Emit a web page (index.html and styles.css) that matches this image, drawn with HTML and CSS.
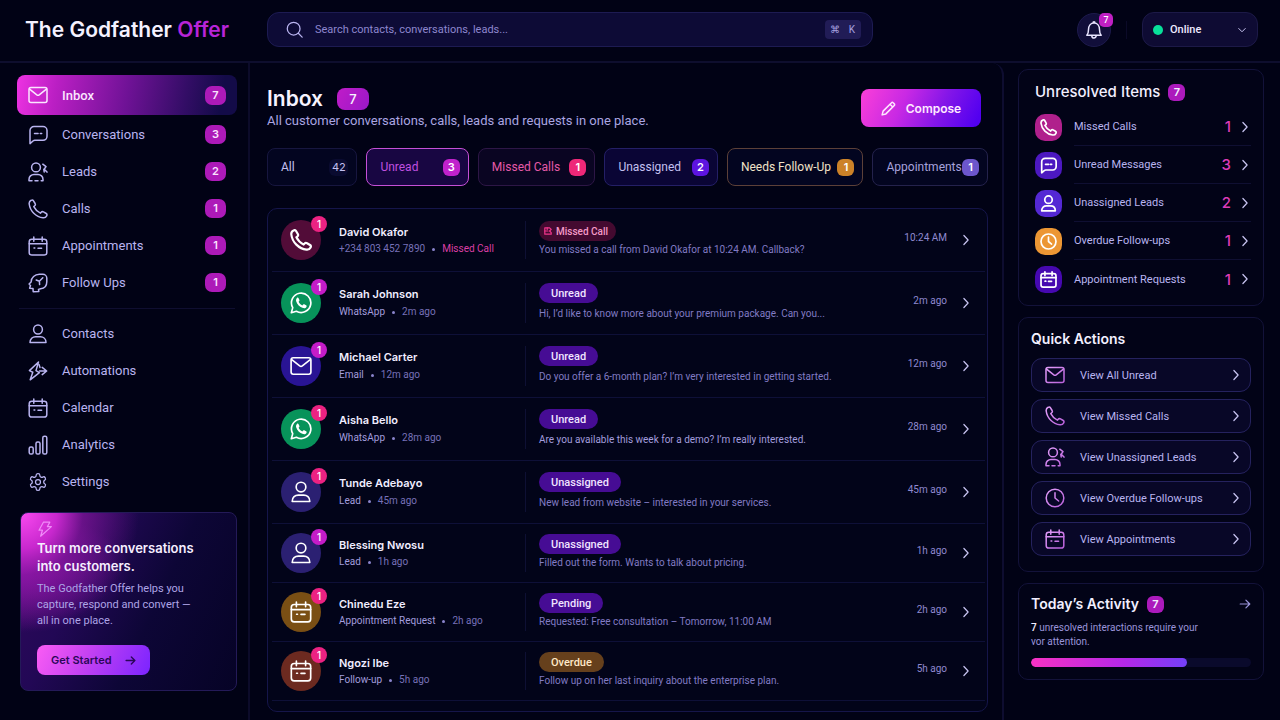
FILE: index.html
```
<!DOCTYPE html>
<html lang="en">
<head>
<meta charset="utf-8">
<title>The Godfather Offer – Inbox</title>
<meta name="viewport" content="width=device-width, initial-scale=1">
<link rel="stylesheet" href="styles.css">
</head>
<body>
<svg class="sprite" width="0" height="0" aria-hidden="true">
  <defs>
    <linearGradient id="pinkStroke" gradientUnits="userSpaceOnUse" x1="0" y1="0" x2="20" y2="20">
      <stop offset="0" stop-color="#e9a6ff"/><stop offset="1" stop-color="#b45ad6"/>
    </linearGradient>
  </defs>
  <symbol id="mail" viewBox="0 0 20 20"><rect x="1" y="2.5" width="18" height="15" rx="2"/><path d="M1.6 4.2l7.2 5.7q1.2 .9 2.4 0l7.2-5.7"/></symbol>
  <symbol id="chat" viewBox="0 0 20 20"><path d="M2 18.6V5.5a4 4 0 0 1 4-4h9a4 4 0 0 1 4 4v5.8a4 4 0 0 1-4 4H6.8q-1 0-1.8.7z"/><path d="M6.5 8.6h3.6M12.3 8.6h1.4"/></symbol>
  <symbol id="leads" viewBox="0 0 20 20"><circle cx="8" cy="5.4" r="4.4"/><path d="M4 18.8H1v-1.4a5 5 0 0 1 5-5h4a5 5 0 0 1 5 5v1.4h-1.8M7 18.8h3"/><path d="M14.8 2.2l3.2 2.4-1.8 2.6 2.8 2.9M15.8 7.3l.4 2.6"/></symbol>
  <symbol id="phone" viewBox="0 0 20 20"><path d="M3.2 1.3C1.8 1.9 1 3.2 1.2 5 2 12 8 18 15 18.8c1.8.2 3-.6 3.7-2 .5-1 .3-1.8-.5-2.3l-2.7-1.6c-.9-.5-1.7-.3-2.3.4l-.8.9C10 13 7 10 5.8 7.6l.9-.8c.7-.6.9-1.4.4-2.3L5.5 1.8C5 1 4.2.8 3.2 1.3z"/></symbol>
  <symbol id="calendar" viewBox="0 0 20 20"><rect x="1.2" y="3.2" width="17.6" height="15.8" rx="2.6"/><path d="M1.2 7.8h17.6M5.8 1v4.2M14.2 1v4.2M6 12h.8M10 12.2h3.6"/></symbol>
  <symbol id="follow" viewBox="0 0 20 20"><path d="M5.2 18.8l-.2-3.2-3.4-.4.9-2.6-1.4-1.5 2-2.2C3.2 4.4 6.8 1.5 11.4 1.3h3.4a4 4 0 0 1 4 4v3.4c0 4.1-2.6 6.7-6.2 7.1l-2.1.6.3 2.2z"/><path d="M8.2 7l3.2 1.2 3.4-3.4M11.4 8.2l.2 3.4"/></symbol>
  <symbol id="user" viewBox="0 0 20 20"><circle cx="10" cy="5.5" r="4.4"/><path d="M2 18.6c0-3.8 2.6-5.8 5.6-5.8h4.8c3 0 5.6 2 5.6 5.8z"/></symbol>
  <symbol id="automation" viewBox="0 0 20 20"><path d="M10.5 1L1.4 9.6l3.4 1.6-2.6 7.6 9.2-7.2-3.4-2z"/><path d="M11.5 10h7M14.2 6.4l4.5 3.6-4.5 3.6M11 3.5l1 3"/></symbol>
  <symbol id="bolt" viewBox="0 0 20 20"><path d="M8 1.5h8l-3 5.5h5L4.5 19l2.3-7.5H2.5z"/></symbol>
  <symbol id="bars" viewBox="0 0 20 20"><rect x="1.2" y="12" width="4" height="7" rx="1.6"/><rect x="8" y="7" width="4" height="12" rx="1.6"/><rect x="14.8" y="1.2" width="4" height="17.8" rx="1.6"/></symbol>
  <symbol id="gear" viewBox="0 0 24 24"><path d="M12.22 2h-.44a2 2 0 0 0-2 2v.18a2 2 0 0 1-1 1.73l-.43.25a2 2 0 0 1-2 0l-.15-.08a2 2 0 0 0-2.73.73l-.22.38a2 2 0 0 0 .73 2.73l.15.1a2 2 0 0 1 1 1.72v.51a2 2 0 0 1-1 1.74l-.15.09a2 2 0 0 0-.73 2.73l.22.38a2 2 0 0 0 2.73.73l.15-.08a2 2 0 0 1 2 0l.43.25a2 2 0 0 1 1 1.73V20a2 2 0 0 0 2 2h.44a2 2 0 0 0 2-2v-.18a2 2 0 0 1 1-1.73l.43-.25a2 2 0 0 1 2 0l.15.08a2 2 0 0 0 2.73-.73l.22-.39a2 2 0 0 0-.73-2.73l-.15-.08a2 2 0 0 1-1-1.74v-.5a2 2 0 0 1 1-1.74l.15-.09a2 2 0 0 0 .73-2.73l-.22-.38a2 2 0 0 0-2.73-.73l-.15.08a2 2 0 0 1-2 0l-.43-.25a2 2 0 0 1-1-1.73V4a2 2 0 0 0-2-2z"/><circle cx="12" cy="12" r="3"/></symbol>
  <symbol id="clock" viewBox="0 0 20 20"><circle cx="10" cy="10" r="8.8"/><path d="M10 4.8V10l3.6 3"/></symbol>
  <symbol id="search" viewBox="0 0 20 20"><circle cx="9" cy="9" r="7.5"/><path d="M14.5 14.5L19 19"/></symbol>
  <symbol id="bell" viewBox="0 0 20 20"><path d="M2.8 15.2c1.4-1.4 1.7-2.9 1.7-5.7C4.5 5.8 6.6 3 10 3s5.5 2.8 5.5 6.5c0 2.8.3 4.3 1.7 5.7zM7.8 15.5a2.2 2.6 0 0 0 4.4 0M9 2.8a1 1 0 0 1 2 0"/></symbol>
  <symbol id="pencil" viewBox="0 0 20 20"><path d="M1.5 18.5l1.3-5L14 2.3a1.5 1.5 0 0 1 2.2 0l1.5 1.5a1.5 1.5 0 0 1 0 2.2L6.5 17.2zM12 4.3l3.7 3.7"/></symbol>
  <symbol id="right" viewBox="0 0 20 20"><path d="M6.5 2.5l7 7.5-7 7.5"/></symbol>
  <symbol id="down" viewBox="0 0 20 20"><path d="M3.5 7l6.5 6.5L16.5 7"/></symbol>
  <symbol id="arrow" viewBox="0 0 20 20"><path d="M2 10h16M11.5 3.5L18 10l-6.5 6.5"/></symbol>
  <symbol id="whatsapp" viewBox="0 0 20 20"><path d="M1.2 18.8l1.3-4.6A8.8 8.8 0 1 1 5.8 17.5z"/><path class="solid" d="M6.3 5.4c.5-.5 1.2-.4 1.5.2l.8 1.7c.1.4 0 .7-.3 1l-.5.6c.8 1.5 1.9 2.6 3.4 3.3l.8-.8c.3-.3.6-.4 1-.2l1.6.8c.6.3.7.8.4 1.3-.6 1.2-1.8 1.7-3.1 1.3-3.2-.9-5.4-3.1-6.3-6.2-.3-1.2 0-2.3.7-3z"/></symbol>
  <symbol id="missed" viewBox="0 0 20 20"><path d="M2 2h12l4 4-4 4 4 4v4H2z"/><path d="M2 10h8M8 2v4"/></symbol>
</svg>

<header class="topbar">
  <h1 class="brand">The Godfather <span>Offer</span></h1>
  <label class="search">
    <svg class="icon search-icon"><use href="#search"/></svg>
    <input type="search" aria-label="Search" placeholder="Search contacts, conversations, leads...">
    <kbd><span>⌘</span><span>K</span></kbd>
  </label>
  <div class="account">
    <button class="bell" type="button" aria-label="Notifications"><svg class="icon"><use href="#bell"/></svg><span class="bell-count">7</span></button>
    <span class="rule"></span>
    <div class="status">
      <span class="dot"></span>
      <select aria-label="Status"><option>Online</option><option>Away</option></select>
      <svg class="icon chevron"><use href="#down"/></svg>
    </div>
  </div>
</header>

<div class="shell">
  <aside class="sidebar">
    <nav class="nav">
      <a class="active" href="#"><svg class="icon"><use href="#mail"/></svg>Inbox<b class="count">7</b></a>
      <a href="#"><svg class="icon"><use href="#chat"/></svg>Conversations<b class="count">3</b></a>
      <a href="#"><svg class="icon"><use href="#leads"/></svg>Leads<b class="count">2</b></a>
      <a href="#"><svg class="icon"><use href="#phone"/></svg>Calls<b class="count">1</b></a>
      <a href="#"><svg class="icon"><use href="#calendar"/></svg>Appointments<b class="count">1</b></a>
      <a href="#"><svg class="icon"><use href="#follow"/></svg>Follow Ups<b class="count">1</b></a>
      <hr>
      <a href="#"><svg class="icon"><use href="#user"/></svg>Contacts</a>
      <a href="#"><svg class="icon"><use href="#automation"/></svg>Automations</a>
      <a href="#"><svg class="icon"><use href="#calendar"/></svg>Calendar</a>
      <a href="#"><svg class="icon"><use href="#bars"/></svg>Analytics</a>
      <a href="#"><svg class="icon"><use href="#gear"/></svg>Settings</a>
    </nav>
    <section class="promo">
      <svg class="icon bolt"><use href="#bolt"/></svg>
      <h2>Turn more conversations<br>into customers.</h2>
      <p>The Godfather Offer helps you<br>capture, respond and convert —<br>all in one place.</p>
      <button type="button">Get Started<svg class="icon"><use href="#arrow"/></svg></button>
    </section>
  </aside>

  <main class="main">
    <div class="head">
      <div>
        <h2 class="title">Inbox <span class="title-count">7</span></h2>
        <p class="lead">All customer conversations, calls, leads and requests in one place.</p>
      </div>
      <button class="compose" type="button"><svg class="icon"><use href="#pencil"/></svg>Compose</button>
    </div>

    <div class="tabs">
      <button type="button" class="tab all">All<b>42</b></button>
      <button type="button" class="tab unread">Unread<b>3</b></button>
      <button type="button" class="tab missed">Missed Calls<b>1</b></button>
      <button type="button" class="tab unassigned">Unassigned<b>2</b></button>
      <button type="button" class="tab followup">Needs Follow-Up<b>1</b></button>
      <button type="button" class="tab appts">Appointments<b>1</b></button>
    </div>

    <ul class="list">
      <li class="row first">
        <div class="avatar wine"><svg class="icon"><use href="#phone"/></svg><b class="hot">1</b></div>
        <div class="who"><h3>David Okafor</h3><p><span class="dim">+234 803 452 7890</span><i></i><span class="pink">Missed Call</span></p></div>
        <div class="what"><span class="tag rose"><svg class="icon"><use href="#missed"/></svg>Missed Call</span><p>You missed a call from David Okafor at 10:24 AM. Callback?</p></div>
        <time>10:24 AM</time><svg class="icon go"><use href="#right"/></svg>
      </li>
      <li class="row">
        <div class="avatar green"><svg class="icon"><use href="#whatsapp"/></svg><b>1</b></div>
        <div class="who"><h3>Sarah Johnson</h3><p>WhatsApp<i></i><span class="dim">2m ago</span></p></div>
        <div class="what"><span class="tag">Unread</span><p>Hi, I’d like to know more about your premium package. Can you...</p></div>
        <time>2m ago</time><svg class="icon go"><use href="#right"/></svg>
      </li>
      <li class="row">
        <div class="avatar indigo"><svg class="icon"><use href="#mail"/></svg><b>1</b></div>
        <div class="who"><h3>Michael Carter</h3><p>Email<i></i><span class="dim">12m ago</span></p></div>
        <div class="what"><span class="tag">Unread</span><p>Do you offer a 6-month plan? I’m very interested in getting started.</p></div>
        <time>12m ago</time><svg class="icon go"><use href="#right"/></svg>
      </li>
      <li class="row">
        <div class="avatar green"><svg class="icon"><use href="#whatsapp"/></svg><b class="hot">1</b></div>
        <div class="who"><h3>Aisha Bello</h3><p>WhatsApp<i></i><span class="dim">28m ago</span></p></div>
        <div class="what bright"><span class="tag">Unread</span><p>Are you available this week for a demo? I’m really interested.</p></div>
        <time>28m ago</time><svg class="icon go"><use href="#right"/></svg>
      </li>
      <li class="row">
        <div class="avatar violet"><svg class="icon"><use href="#user"/></svg><b class="hot">1</b></div>
        <div class="who"><h3>Tunde Adebayo</h3><p>Lead<i></i><span class="dim">45m ago</span></p></div>
        <div class="what"><span class="tag">Unassigned</span><p>New lead from website – interested in your services.</p></div>
        <time>45m ago</time><svg class="icon go"><use href="#right"/></svg>
      </li>
      <li class="row compact">
        <div class="avatar violet"><svg class="icon"><use href="#user"/></svg><b>1</b></div>
        <div class="who"><h3>Blessing Nwosu</h3><p>Lead<i></i><span class="dim">1h ago</span></p></div>
        <div class="what"><span class="tag">Unassigned</span><p>Filled out the form. Wants to talk about pricing.</p></div>
        <time>1h ago</time><svg class="icon go"><use href="#right"/></svg>
      </li>
      <li class="row compact">
        <div class="avatar amber"><svg class="icon"><use href="#calendar"/></svg><b class="hot">1</b></div>
        <div class="who"><h3>Chinedu Eze</h3><p>Appointment Request<i></i><span class="dim">2h ago</span></p></div>
        <div class="what"><span class="tag">Pending</span><p>Requested: Free consultation – Tomorrow, 11:00 AM</p></div>
        <time>2h ago</time><svg class="icon go"><use href="#right"/></svg>
      </li>
      <li class="row compact">
        <div class="avatar rust"><svg class="icon"><use href="#calendar"/></svg><b class="hot">1</b></div>
        <div class="who"><h3>Ngozi Ibe</h3><p>Follow-up<i></i><span class="dim">5h ago</span></p></div>
        <div class="what"><span class="tag brown">Overdue</span><p>Follow up on her last inquiry about the enterprise plan.</p></div>
        <time>5h ago</time><svg class="icon go"><use href="#right"/></svg>
      </li>
    </ul>
  </main>

  <aside class="rail">
    <section class="card unresolved">
      <h2>Unresolved Items <b class="pill">7</b></h2>
      <ul>
        <li><span class="tile magenta"><svg class="icon"><use href="#phone"/></svg></span><a href="#">Missed Calls<b>1</b><svg class="icon go"><use href="#right"/></svg></a></li>
        <li><span class="tile purple"><svg class="icon"><use href="#chat"/></svg></span><a href="#">Unread Messages<b>3</b><svg class="icon go"><use href="#right"/></svg></a></li>
        <li><span class="tile blue"><svg class="icon"><use href="#user"/></svg></span><a href="#">Unassigned Leads<b>2</b><svg class="icon go"><use href="#right"/></svg></a></li>
        <li><span class="tile orange"><svg class="icon"><use href="#clock"/></svg></span><a href="#">Overdue Follow-ups<b>1</b><svg class="icon go"><use href="#right"/></svg></a></li>
        <li><span class="tile deep"><svg class="icon"><use href="#calendar"/></svg></span><a href="#">Appointment Requests<b>1</b><svg class="icon go"><use href="#right"/></svg></a></li>
      </ul>
    </section>
    <section class="card quick">
      <h2>Quick Actions</h2>
      <button type="button"><svg class="icon tint"><use href="#mail"/></svg>View All Unread<svg class="icon go"><use href="#right"/></svg></button>
      <button type="button"><svg class="icon tint"><use href="#phone"/></svg>View Missed Calls<svg class="icon go"><use href="#right"/></svg></button>
      <button type="button"><svg class="icon tint"><use href="#leads"/></svg>View Unassigned Leads<svg class="icon go"><use href="#right"/></svg></button>
      <button type="button"><svg class="icon tint"><use href="#clock"/></svg>View Overdue Follow-ups<svg class="icon go"><use href="#right"/></svg></button>
      <button type="button"><svg class="icon tint"><use href="#calendar"/></svg>View Appointments<svg class="icon go"><use href="#right"/></svg></button>
    </section>
    <section class="card activity">
      <h2>Today’s Activity <b class="pill">7</b><svg class="icon"><use href="#arrow"/></svg></h2>
      <p><strong>7</strong> unresolved interactions require your<br>vor attention.</p>
      <progress max="100" value="71" aria-label="Activity"></progress>
    </section>
  </aside>
</div>
</body>
</html>
```
FILE: styles.css
```
* { box-sizing: border-box; }
body, h1, h2, h3, p, ul { margin: 0; padding: 0; }
body {
  min-height: 100vh;
  display: flex;
  flex-direction: column;
  background: #010215;
  color: #b9b4f0;
  font-family: Roboto, "Liberation Sans", sans-serif;
  font-size: 13px;
}
h1, h2, h3, b, .compose, .promo button { font-family: Inter, "Liberation Sans", sans-serif; }
ul { list-style: none; }
a { color: inherit; text-decoration: none; }
button, input, select { font: inherit; color: inherit; }
button { cursor: pointer; }
.sprite { position: absolute; }
.icon {
  width: 20px;
  height: 20px;
  flex: none;
  fill: none;
  stroke: currentColor;
  stroke-width: 1.5;
  stroke-linecap: round;
  stroke-linejoin: round;
}
.solid { fill: currentColor; stroke: none; }
.go { width: 12px; height: 12px; stroke-width: 2; color: #c9c5f2; }

/* Top bar */
.topbar {
  display: flex;
  align-items: center;
  height: 63px;
  padding: 0 22px 2px 25px;
  border-bottom: 2px solid #0e0e2e;
}
.brand { width: 242px; font-size: 21px; font-weight: 600; line-height: 30px; color: #f4f1ff; white-space: nowrap; }
.brand span { color: #b824d8; }
.search {
  display: flex;
  align-items: center;
  flex: 0 1 606px;
  height: 35px;
  padding: 0 11px 0 18px;
  border: 1px solid #1d1b52;
  border-radius: 12px;
  background: #0d0b36;
}
.search-icon { width: 17px; height: 17px; color: #b9b4f0; }
.search input {
  flex: 1;
  min-width: 0;
  margin-left: 12px;
  padding: 0;
  border: 0;
  outline: 0;
  background: none;
  font-size: 11px;
}
.search input::placeholder { color: #8d87cf; opacity: 1; }
kbd {
  display: flex;
  align-items: center;
  justify-content: space-between;
  width: 36px;
  height: 19px;
  padding: 0 6px 0 5px;
  border-radius: 4px;
  background: #211c56;
  font-family: inherit;
  font-size: 10px;
  color: #a8a2e0;
}
.account { display: flex; align-items: center; margin-left: auto; }
.bell {
  position: relative;
  display: grid;
  place-items: center;
  width: 34px;
  height: 34px;
  padding: 0;
  border: 1px solid #1d1a4c;
  border-radius: 50%;
  background: #110e3a;
  color: #e8e4ff;
}
.bell-count {
  position: absolute;
  top: -1px;
  right: -3px;
  width: 14px;
  height: 14px;
  border-radius: 5px;
  background: #c020c4;
  color: #fff;
  font-size: 9px;
  font-weight: 500;
  line-height: 14px;
}
.rule { width: 1px; height: 18px; margin: 0 15px; background: #0b0a28; }
.status {
  display: flex;
  align-items: center;
  width: 116px;
  height: 35px;
  padding: 0 10px;
  border: 1px solid #1c1947;
  border-radius: 12px;
  background: #0e0b33;
}
.dot { width: 10px; height: 10px; border-radius: 50%; background: #08e09a; }
.status select {
  appearance: none;
  flex: 1;
  min-width: 0;
  margin-left: 7px;
  padding: 0;
  border: 0;
  background: none;
  font-size: 11px;
  font-weight: 500;
  color: #eeeaff;
}
.chevron { width: 10px; height: 10px; stroke-width: 2; color: #c9c5f2; }

/* Page columns */
.shell { flex: 1; display: grid; grid-template-columns: 250px minmax(0, 1fr) 276px; }

/* Sidebar */
.sidebar { padding: 12px 11px 12px 17px; border-right: 2px solid #0c0b2a; }
.nav a {
  display: flex;
  align-items: center;
  height: 37px;
  padding: 0 11px;
  gap: 14px;
  border-radius: 8px;
}
.nav a.active {
  height: 40px;
  margin-bottom: 1px;
  background: linear-gradient(100deg, #ee33e2 0%, #bb1fc4 18%, #6f1296 50%, #330d66 76%, #130b48 92%);
  color: #fbe6ff;
  font-weight: 500;
}
.count {
  width: 21px;
  height: 19px;
  margin-left: auto;
  border-radius: 7px;
  background: #ad1ab8;
  color: #fbe3ff;
  font-size: 11px;
  font-weight: 600;
  line-height: 19px;
  text-align: center;
}
.nav hr { height: 1px; margin: 7px 2px 6px; border: 0; background: #0f0e30; }
.promo {
  margin: 12px 0 0 3px;
  padding: 8px 16px 15px;
  border: 1px solid #241a58;
  border-radius: 8px;
  background:
    radial-gradient(circle at 0 0, #fa4af0 0, #c828ce 36px, rgba(150, 24, 170, .6) 62px, rgba(80, 14, 120, 0) 118px),
    radial-gradient(ellipse at 0 60px, #76129a 0, rgba(60, 10, 110, 0) 110px),
    linear-gradient(115deg, #31085c 0%, #220855 30%, #0d0636 60%, #060326 100%);
}
.bolt { display: block; width: 16px; height: 16px; color: #f08cf8; }
.promo h2 { font-size: 13px; font-weight: 600; line-height: 18px; margin-top: 2px; color: #f6eeff; white-space: nowrap; }
.promo p { margin: 6px 0 16px; font-size: 11px; line-height: 16px; color: #aea4e6; white-space: nowrap; }
.promo button {
  display: flex;
  align-items: center;
  justify-content: space-between;
  width: 113px;
  height: 30px;
  padding: 0 14px;
  border: 0;
  border-radius: 8px;
  background: linear-gradient(115deg, #fa5cf4 0%, #c341f2 45%, #7a24ff 100%);
  font-size: 11px;
  font-weight: 600;
  color: #2a0758;
}
.promo button .icon { width: 11px; height: 11px; stroke-width: 2.5; }

/* Main column */
.main { padding: 23px 14px 8px 17px; border-right: 2px solid #0e0d30; border-radius: 0 12px 0 0; }
.head { display: flex; justify-content: space-between; align-items: center; padding-right: 7px; }
.title { display: flex; align-items: center; gap: 14px; font-size: 21px; font-weight: 600; line-height: 26px; color: #f6f3ff; }
.title-count {
  width: 32px;
  height: 22px;
  border-radius: 8px;
  background: linear-gradient(120deg, #c01cc8, #9a18c8);
  font-size: 13px;
  font-weight: 500;
  line-height: 22px;
  text-align: center;
}
.lead { line-height: 18px; color: #aaa5e2; }
.compose {
  display: flex;
  align-items: center;
  justify-content: center;
  gap: 10px;
  width: 120px;
  height: 38px;
  padding: 0;
  border: 0;
  border-radius: 8px;
  background: linear-gradient(115deg, #fb3fd8 0%, #c829e4 35%, #8416e8 65%, #5200f0 95%);
  color: #ffe9ff;
  font-size: 12px;
  font-weight: 600;
}
.compose .icon { width: 15px; height: 15px; stroke-width: 2; }

.tabs { display: grid; grid-template-columns: 90fr 102fr 117fr 113fr 136fr 115fr; gap: 9px; margin-top: 18px; }
.tab {
  display: flex;
  align-items: center;
  justify-content: space-between;
  height: 38px;
  padding: 0 8px 0 13px;
  border: 1px solid #17163f;
  border-radius: 8px;
  background: #030520;
  font-size: 12px;
  color: #c4c0f0;
  white-space: nowrap;
}
.tab b { width: 17px; height: 17px; border-radius: 6px; font-size: 11px; font-weight: 600; line-height: 17px; color: #fff; }
.tab.all b { width: 19px; background: #0a0b30; color: #c4c0f0; font-weight: 400; }
.tab.unread { border-color: #c54fd6; background: #180642; color: #c050e0; }
.tab.unread b { background: #c022cc; }
.tab.missed { border-color: #2d1646; background: #0a0522; color: #e55aa8; }
.tab.missed b { background: #ee2878; }
.tab.unassigned { border-color: #241f66; background: #0a0535; }
.tab.unassigned b { background: #5d14e0; }
.tab.followup { border-color: #5c4038; color: #f1e2c8; }
.tab.followup b { background: #cc8228; }
.tab.appts { border-color: #24224c; color: #a7a2dc; }
.tab.appts b { background: #6c56cc; }

/* Conversation list */
.list { margin-top: 22px; padding: 0 2px 10px 4px; border: 1px solid #15154a; border-radius: 10px; background: #020419; }
.row {
  display: grid;
  grid-template-columns: 41px 203px minmax(0, 1fr) auto 12px;
  align-items: center;
  height: 63px;
  padding: 0 13px 0 9px;
  border-bottom: 1px solid #0e1038;
}
.row.compact { height: 59px; }
.avatar {
  position: relative;
  display: grid;
  place-items: center;
  width: 40px;
  height: 40px;
  border-radius: 50%;
  color: #fff;
}
.avatar .icon { width: 22px; height: 22px; }
.wine { background: #520c38; }
.wine .icon { stroke-width: 2; }
.green { background: #07935a; }
.indigo { background: #291494; }
.violet { background: #2b2072; }
.amber { background: #7a4f14; }
.rust { background: #6c2a20; }
.avatar b {
  position: absolute;
  top: -4px;
  right: -6px;
  width: 16px;
  height: 16px;
  border-radius: 50%;
  background: #c41cc8;
  font-size: 10px;
  font-weight: 500;
  line-height: 16px;
  text-align: center;
}
.avatar .hot { background: #ec2282; }
.who { padding-left: 17px; white-space: nowrap; }
.who h3 { font-size: 11px; font-weight: 600; line-height: 18px; color: #f0edff; }
.who p { display: flex; align-items: center; font-size: 10px; line-height: 18px; color: #a39dde; }
.who i { width: 3px; height: 3px; margin: 0 7px; border-radius: 50%; background: #8a84cc; }
.who .dim { color: #7771b8; }
.who .pink { color: #dc3fa4; }
.first .who p, .compact .who p { line-height: 16px; }
.what { padding-left: 13px; border-left: 1px solid #0e1034; }
.what p { font-size: 10px; line-height: 18px; color: #817bc4; white-space: nowrap; }
.what.bright p { color: #a39dde; }
.tag {
  display: inline-flex;
  align-items: center;
  gap: 4px;
  height: 20px;
  margin-bottom: 2px;
  padding: 0 12px;
  border-radius: 10px;
  background: #460c94;
  font-size: 11px;
  font-weight: 500;
  color: #f0e4ff;
}
.compact .tag, .first .tag { margin-bottom: 0; }
.tag.rose { padding: 0 8px 0 5px; background: #440a30; color: #f59ac8; font-size: 10px; }
.tag .icon { width: 8px; height: 8px; stroke-width: 3; color: #f0358c; }
.tag.brown { background: #66401c; color: #ffe8c8; }
.row time { padding: 0 13px 6px; font-size: 10px; color: #8f89d0; }

/* Right rail */
.rail { display: flex; flex-direction: column; gap: 11px; padding: 6px 16px 12px 14px; }
.card { border: 1px solid #13123a; border-radius: 10px; background: #020317; }
.card h2 { display: flex; align-items: center; font-size: 15px; font-weight: 500; line-height: 20px; color: #f2efff; white-space: nowrap; }
.pill {
  width: 17px;
  height: 17px;
  margin-left: 8px;
  border-radius: 6px;
  background: #ac1abc;
  font-size: 11px;
  font-weight: 600;
  line-height: 17px;
  text-align: center;
}
.unresolved { padding: 12px 12px 7px 16px; }
.unresolved ul { margin-top: 6px; }
.unresolved li { display: flex; align-items: center; gap: 12px; height: 38px; }
.unresolved a { flex: 1; display: flex; align-items: center; height: 38px; border-bottom: 1px solid #0f0f32; font-size: 11px; white-space: nowrap; }
.unresolved li:last-child a { border-bottom: 0; }
.unresolved a b { margin-left: auto; margin-right: 8px; font-size: 15px; font-weight: 500; color: #dd3cb8; }
.tile { display: grid; place-items: center; width: 27px; height: 27px; border-radius: 10px; color: #fff; }
.tile .icon { width: 17px; height: 17px; stroke-width: 2; }
.magenta { background: #b0208c; }
.purple { background: #4c18c0; }
.blue { background: #5428d4; }
.orange { background: #ec9634; }
.deep { background: #4608b0; }
.quick { display: flex; flex-direction: column; gap: 7px; padding: 11px 12px 15px; }
.quick h2, .activity h2 { font-size: 14px; font-weight: 600; }
.quick h2 { margin-bottom: 2px; }
.quick button {
  display: flex;
  align-items: center;
  height: 34px;
  padding: 0 8px 0 13px;
  gap: 15px;
  border: 1px solid #25225e;
  border-radius: 11px;
  background: #080727;
  font-size: 11px;
  white-space: nowrap;
}
.tint { stroke: url(#pinkStroke); }
.quick .go { margin-left: auto; }
.activity { padding: 10px 12px 12px; }
.activity h2 .icon { width: 12px; height: 12px; margin-left: auto; stroke-width: 2; color: #9a94da; }
.activity p { margin: 7px 0 9px; font-size: 10px; line-height: 14px; color: #9a94da; white-space: nowrap; }
.activity strong { font-weight: 500; color: #f2efff; }
progress { appearance: none; display: block; width: 100%; height: 9px; border: 0; border-radius: 5px; overflow: hidden; background: #0a0a2c; }
progress::-webkit-progress-bar { background: #0a0a2c; }
progress::-webkit-progress-value { border-radius: 5px; background: linear-gradient(90deg, #f832c4, #b428e8 60%, #7440f8); }
```
